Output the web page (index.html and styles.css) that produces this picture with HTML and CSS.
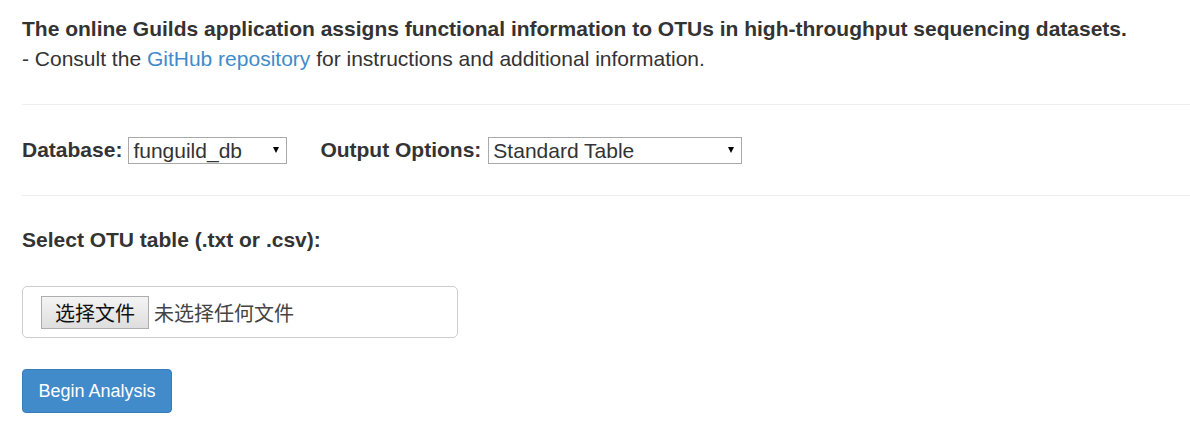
FILE: index.html
```html
<!DOCTYPE html>
<html>
<head>
<meta charset="utf-8">
<link rel="stylesheet" href="styles.css">
</head>
<body>
<div class="page">
  <div class="intro">
    <div class="lead">The online Guilds application assigns functional information to OTUs in high-throughput sequencing datasets.</div>
    <div>- Consult the <a class="link" href="#">GitHub repository</a> for instructions and additional information.</div>
  </div>
  <hr class="rule rule-first">
  <div class="options">
    <label class="opt-label">Database:</label>
    <span class="select-wrap sel-db">
      <select class="select"><option>funguild_db</option></select>
    </span>
    <label class="opt-label opt-label-second">Output Options:</label>
    <span class="select-wrap sel-out">
      <select class="select"><option>Standard Table</option></select>
    </span>
  </div>
  <hr class="rule rule-second">
  <div class="file-label">Select OTU table (.txt or .csv):</div>
  <div class="file-box">
    <button class="file-btn" type="button">选择文件</button>
    <span class="file-status">未选择任何文件</span>
  </div>
  <button class="btn-primary" type="button">Begin Analysis</button>
</div>
</body>
</html>
```
FILE: styles.css
```css
html, body {
  margin: 0;
  padding: 0;
  background: #fff;
}
body {
  font-family: "Liberation Sans", Arial, sans-serif;
  font-size: 21px;
  line-height: 30px;
  color: #333;
}
.page {
  padding: 14px 0 0 22px;
}
.lead {
  font-weight: bold;
}
.link {
  color: #428bca;
  text-decoration: none;
}
.rule {
  border: 0;
  border-top: 1px solid #eee;
  margin: 0;
  height: 0;
}
.rule-first {
  margin-top: 30px;
}
.options {
  display: flex;
  align-items: center;
  height: 27px;
  margin-top: 31px;
}
.rule-second {
  margin-top: 32px;
}
.opt-label {
  font-weight: bold;
  margin-right: 6px;
}
.opt-label-second {
  margin-left: 33px;
  margin-right: 7px;
}
.select-wrap {
  position: relative;
  display: block;
  height: 27px;
}
.sel-db { width: 159px; }
.sel-out { width: 254px; }
.select-wrap::after {
  content: "";
  position: absolute;
  right: 8px;
  top: 11px;
  width: 0;
  height: 0;
  border-left: 3.5px solid transparent;
  border-right: 3.5px solid transparent;
  border-top: 6px solid #000;
  pointer-events: none;
}
.select {
  -webkit-appearance: none;
  appearance: none;
  box-sizing: border-box;
  width: 100%;
  height: 27px;
  margin: 0;
  padding: 0 0 0 4px;
  border: 1px solid #a9a9a9;
  border-radius: 0;
  background: #fff;
  font-family: "Liberation Sans", Arial, sans-serif;
  font-size: 21px;
  line-height: 25px;
  color: #333;
}
.file-label {
  font-weight: bold;
  margin-top: 29px;
}
.file-box {
  box-sizing: border-box;
  width: 436px;
  height: 52px;
  margin-top: 31px;
  border: 1px solid #ccc;
  border-radius: 5px;
  padding: 9px 0 0 18px;
  display: flex;
  align-items: flex-start;
}
.file-btn {
  box-sizing: border-box;
  height: 33px;
  width: 108px;
  margin: 0;
  padding: 0;
  border: 1px solid #adadad;
  border-radius: 0;
  background: linear-gradient(#f4f4f4, #dedede);
  font-family: "Noto Sans CJK SC", sans-serif;
  font-size: 20px;
  line-height: 31px;
  color: #111;
}
.file-status {
  margin-left: 5px;
  font-family: "Noto Sans CJK SC", sans-serif;
  font-size: 20px;
  line-height: 33px;
  color: #444;
}
.btn-primary {
  display: block;
  box-sizing: border-box;
  margin-top: 31px;
  width: 150px;
  height: 44px;
  padding: 0;
  text-align: center;
  border: 1px solid #357ebd;
  border-radius: 4px;
  background: #428bca;
  color: #fff;
  font-family: "Liberation Sans", Arial, sans-serif;
  font-size: 18px;
  line-height: 42px;
}
```
